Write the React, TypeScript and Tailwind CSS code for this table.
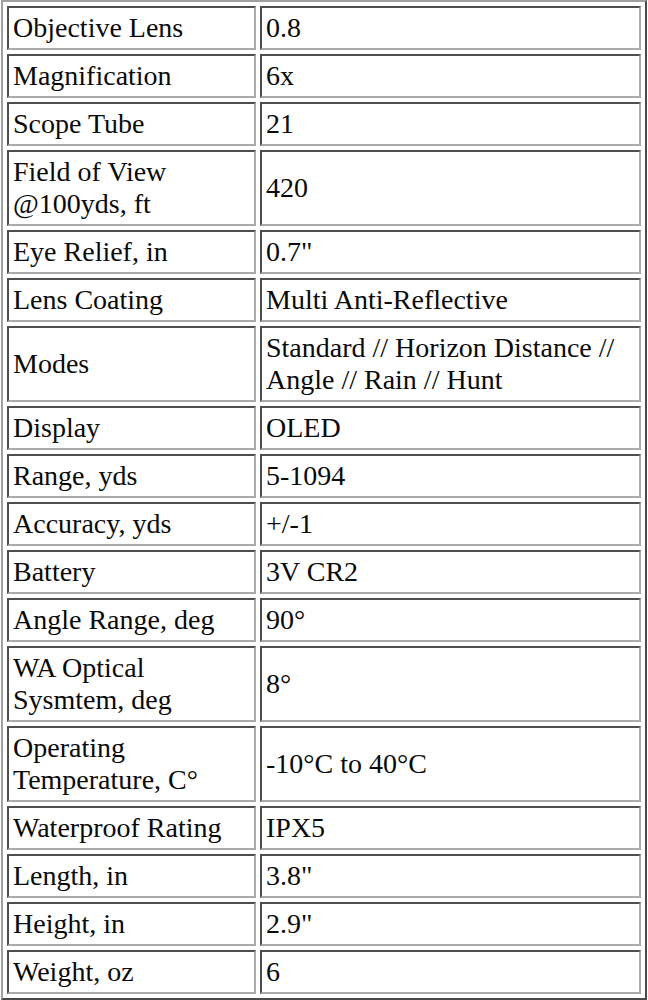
const specs: [string, string][] = [
  ["Objective Lens", "0.8"],
  ["Magnification", "6x"],
  ["Scope Tube", "21"],
  ["Field of View @100yds, ft", "420"],
  ["Eye Relief, in", '0.7"'],
  ["Lens Coating", "Multi Anti-Reflective"],
  ["Modes", "Standard // Horizon Distance // Angle // Rain // Hunt"],
  ["Display", "OLED"],
  ["Range, yds", "5-1094"],
  ["Accuracy, yds", "+/-1"],
  ["Battery", "3V CR2"],
  ["Angle Range, deg", "90°"],
  ["WA Optical Sysmtem, deg", "8°"],
  ["Operating Temperature, C°", "-10°C to 40°C"],
  ["Waterproof Rating", "IPX5"],
  ["Length, in", '3.8"'],
  ["Height, in", '2.9"'],
  ["Weight, oz", "6"],
];

const cell =
  "border-2 border-t-[#4e4e4e] border-l-[#4e4e4e] border-r-[#ababab] border-b-[#ababab] p-[4px] align-middle text-left font-normal";

export default function App() {
  return (
    <div className="min-h-[1000px] bg-white">
      <table
        className="ml-[1px] w-[646px] table-fixed border-separate border-spacing-[4px] border-2 border-t-[#a0a0a0] border-l-[#a0a0a0] border-r-[#4a4a4a] border-b-[#4a4a4a] text-[28px] leading-[32px] text-[#0a0a0a]"
        style={{ fontFamily: '"Liberation Serif", "Times New Roman", serif' }}
      >
        <colgroup>
          <col className="w-[249px]" />
          <col />
        </colgroup>
        <tbody>
          {specs.map(([label, value]) => (
            <tr key={label}>
              <td className={cell}>{label}</td>
              <td className={cell}>{value}</td>
            </tr>
          ))}
        </tbody>
      </table>
    </div>
  );
}
